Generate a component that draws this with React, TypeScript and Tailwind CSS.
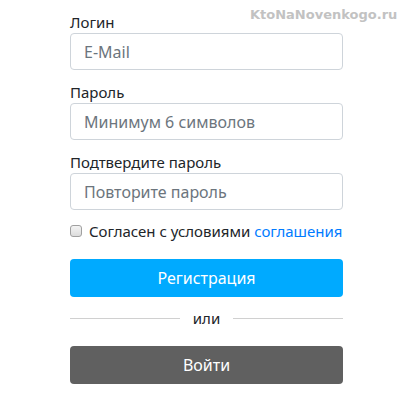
import React from "react";

function Field({ label, placeholder }: { label: string; placeholder: string }) {
  return (
    <div className="flex flex-col">
      <label className="h-[22px] leading-[22px] text-[15px] text-[#212529]">{label}</label>
      <input
        type="text"
        placeholder={placeholder}
        className="h-[37px] w-full rounded-[4px] border border-[#ced4da] bg-white px-[13px] text-[16px] text-[#495057] placeholder-[#6c757d] focus:outline-none"
      />
    </div>
  );
}

export default function App() {
  return (
    <div
      className="relative h-[403px] w-[400px] overflow-hidden bg-white"
      style={{ fontFamily: '"Noto Sans", "Open Sans", sans-serif' }}
    >
      <div
        className="absolute left-[250px] top-[5px] text-[13px] font-bold text-[#c2c2c2]"
        style={{ fontFamily: '"DejaVu Sans", sans-serif' }}
      >
        KtoNaNovenkogo.ru
      </div>
      <form className="ml-[70px] flex w-[273px] flex-col pt-[11px]">
        <Field label="Логин" placeholder="E-Mail" />
        <div className="mt-[11px]">
          <Field label="Пароль" placeholder="Минимум 6 символов" />
        </div>
        <div className="mt-[11px]">
          <Field label="Подтвердите пароль" placeholder="Повторите пароль" />
        </div>
        <div className="mt-[11px] flex h-[20px] items-center gap-[7px] text-[15px] text-[#212529]">
          <span className="h-[12px] w-[12px] rounded-[3px] border border-[#a0a0a0] bg-gradient-to-b from-[#f4f4f4] to-[#dcdcdc]" />
          <span>
            Согласен с условиями <a href="#" className="text-[#007bff]">соглашения</a>
          </span>
        </div>
        <button
          type="button"
          className="mt-[18px] h-[38px] w-full rounded-[4px] bg-[#00aaff] text-[16px] text-white"
        >
          Регистрация
        </button>
        <div className="mt-[10px] flex h-[22px] items-center">
          <div className="h-px flex-1 bg-[#d0d0d0]" />
          <span className="px-[13px] text-[15px] text-[#212529]">или</span>
          <div className="h-px flex-1 bg-[#d0d0d0]" />
        </div>
        <button
          type="button"
          className="mt-[17px] h-[38px] w-full rounded-[4px] bg-[#606060] text-[16px] text-white"
        >
          Войти
        </button>
      </form>
    </div>
  );
}
